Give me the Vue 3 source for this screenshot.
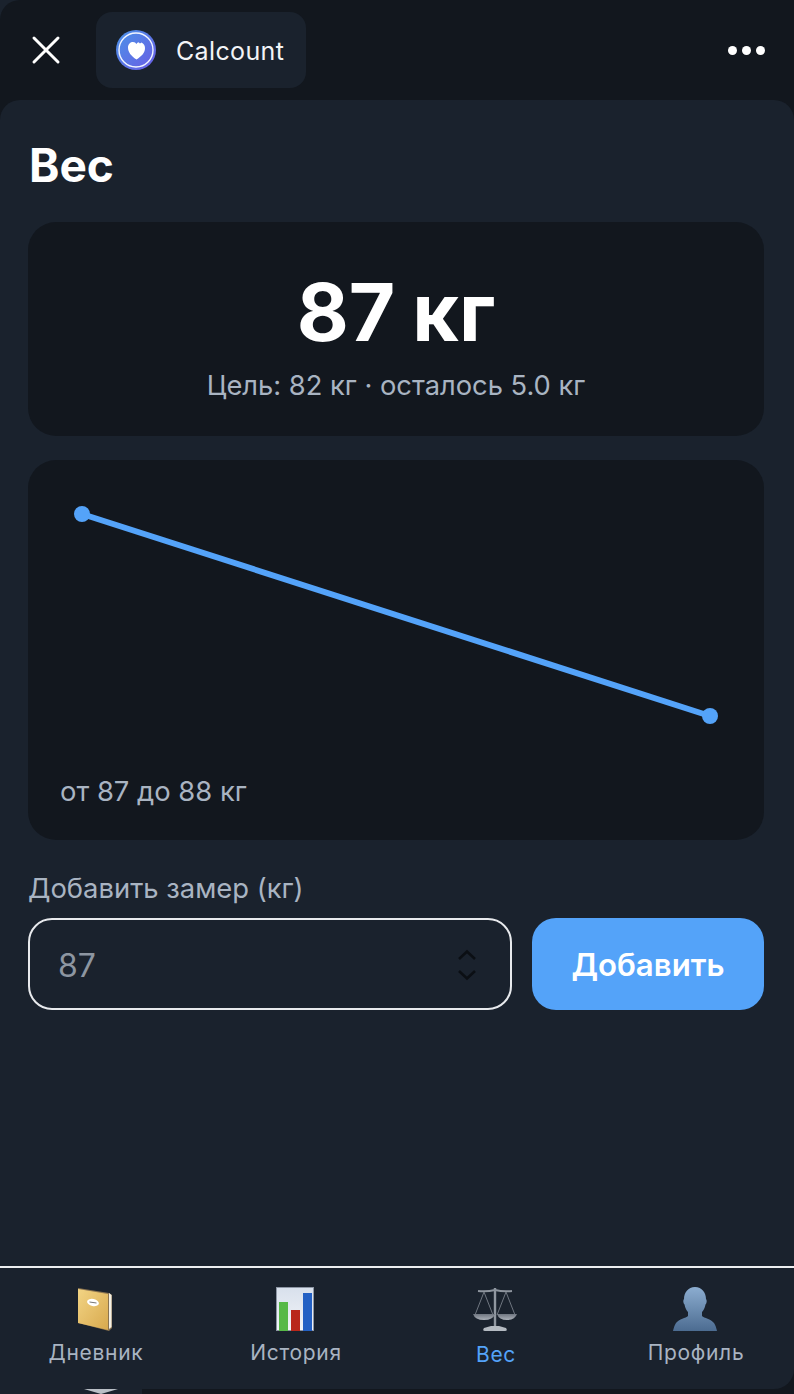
<template>
  <div class="screen">
    <!-- Top bar -->
    <header class="topbar">
      <button class="close-button" aria-label="Закрыть">
        <svg width="30" height="30" viewBox="0 0 30 30">
          <path d="M3 3 L27 27 M27 3 L3 27" stroke="#fff" stroke-width="3" stroke-linecap="round" />
        </svg>
      </button>
      <div class="app-pill">
        <svg class="app-logo" width="40" height="40" viewBox="0 0 40 40">
          <defs>
            <linearGradient id="logoFill" x1="0" y1="0" x2="1" y2="1">
              <stop offset="0" stop-color="#4a93e8" />
              <stop offset="1" stop-color="#6a5ce4" />
            </linearGradient>
          </defs>
          <circle cx="20" cy="20" r="20" fill="url(#logoFill)" />
          <circle cx="20" cy="20" r="17" fill="none" stroke="#f0f4ff" stroke-width="1.4" />
          <path d="M20.500 29.500 C15 26 12 22 12 17.500 C12 14 14.500 12 17 12 C18.600 12 19.700 12.800 20.400 14 C21 13 21.800 12.400 22.600 12.200 L24 13.400 L25.400 12.600 C27.800 13.600 29 15.600 29 18 C29 22.500 26 26 20.500 29.500 Z" fill="#fff" />
        </svg>
        <span class="app-name">Calcount</span>
      </div>
      <div class="more-dots">
        <span></span><span></span><span></span>
      </div>
    </header>

    <!-- Sheet -->
    <div class="sheet">
      <main class="content">
        <h1 class="page-title">Вес</h1>

        <section class="card current-card">
          <div class="current-value">87 кг</div>
          <div class="current-sub">Цель: 82 кг · осталось 5.0 кг</div>
        </section>

        <section class="card chart-card">
          <svg class="chart" width="672" height="283" viewBox="0 0 672 283">
            <line x1="22" y1="22" x2="650" y2="224" stroke="#54a3f9" stroke-width="6" />
            <circle cx="22" cy="22" r="8" fill="#54a3f9" />
            <circle cx="650" cy="224" r="8" fill="#54a3f9" />
          </svg>
          <div class="chart-caption">от 87 до 88 кг</div>
        </section>

        <label class="add-label">Добавить замер (кг)</label>
        <div class="add-row">
          <div class="weight-input">
            <span class="weight-value">87</span>
            <svg class="stepper" width="20" height="32" viewBox="0 0 20 32">
              <path d="M2 10 L10 2.500 L18 10 M2 22 L10 29.500 L18 22" fill="none" stroke="#0b0f14" stroke-width="2.600" />
            </svg>
          </div>
          <button class="add-button">Добавить</button>
        </div>
      </main>

      <!-- Tabs -->
      <nav class="tabs">
        <div v-for="tab in tabs" :key="tab.label" class="tab" :class="{ active: tab.active }">
          <svg v-if="tab.icon === 'book'" width="44" height="44" viewBox="0 0 44 44">
            <defs>
              <linearGradient id="bookFill" x1="0" y1="0" x2="1" y2="1">
                <stop offset="0" stop-color="#f2d484" />
                <stop offset="1" stop-color="#d8a94e" />
              </linearGradient>
            </defs>
            <path d="M5 1 L36 6 L39 8 L39 41 L36 44 L5 36 Z" fill="#8a7350" />
            <path d="M36 6 L38.500 8 L38.500 40 L36 42 Z" fill="#f4f0e4" />
            <path d="M5 2 L35 7 L35 43 L5 36 Z" fill="url(#bookFill)" />
            <ellipse cx="20" cy="15.500" rx="6" ry="3.600" fill="#fff" transform="rotate(12 20 15.500)" />
            <path d="M16.500 15 L23.500 16" stroke="#777" stroke-width="1" />
          </svg>
          <svg v-else-if="tab.icon === 'chart'" width="44" height="44" viewBox="0 0 44 44">
            <defs>
              <linearGradient id="chartFill" x1="0" y1="0" x2="0" y2="1">
                <stop offset="0" stop-color="#d8e0ec" />
                <stop offset="1" stop-color="#f2f4f8" />
              </linearGradient>
            </defs>
            <rect x="3.500" y="0.500" width="37" height="43" fill="url(#chartFill)" stroke="#8d96a4" />
            <rect x="6" y="15" width="9" height="29" fill="#57b947" />
            <rect x="18" y="23" width="9" height="21" fill="#b9271b" />
            <rect x="30" y="6" width="9" height="38" fill="#2360c4" />
          </svg>
          <svg v-else-if="tab.icon === 'scales'" width="44" height="44" viewBox="0 0 44 44">
            <defs>
              <linearGradient id="scaleFill" x1="0" y1="0" x2="0" y2="1">
                <stop offset="0" stop-color="#6f7680" />
                <stop offset="1" stop-color="#a9afb7" />
              </linearGradient>
            </defs>
            <rect x="20.800" y="1" width="2.400" height="38" fill="#9097a0" />
            <path d="M5 4 Q14 5 22 3 Q30 5 39 4" fill="none" stroke="#8d949d" stroke-width="2" />
            <path d="M11 5 L2 28 M11 5 L20 28 M33 5 L24 28 M33 5 L42 28" stroke="#6f7680" stroke-width="1" fill="none" />
            <path d="M0 27 H22 Q20 33 11 33 Q2 33 0 27 Z M24 27 H44 Q42 33 34 33 Q26 33 24 27 Z" fill="url(#scaleFill)" />
            <path d="M18 39 H26 L33 41 Q35 44 32 44 H12 Q9 44 11 41 Z" fill="#b4bac1" />
          </svg>
          <svg v-else width="44" height="44" viewBox="0 0 44 44">
            <defs>
              <linearGradient id="personFill" x1="0" y1="0" x2="0" y2="1">
                <stop offset="0" stop-color="#8cadd0" />
                <stop offset="1" stop-color="#4c6c91" />
              </linearGradient>
            </defs>
            <path d="M22 0 C29 0 33 6 33 12 C34 13 34 16 32.500 17.500 C32 21 30 24 29 25 L29 29 C31 31 38 32 41 36 C43 39 44 44 44 44 H0 C0 44 1 39 3 36 C6 32 13 31 15 29 L15 25 C14 24 12 21 11.500 17.500 C10 16 10 13 11 12 C11 6 15 0 22 0 Z" fill="url(#personFill)" />
          </svg>
          <span class="tab-label">{{ tab.label }}</span>
        </div>
      </nav>
    </div>
    <div class="bottom-strip">
      <span class="strip-notch"></span>
    </div>
  </div>
</template>

<script setup>
const tabs = [
  { label: 'Дневник', icon: 'book' },
  { label: 'История', icon: 'chart' },
  { label: 'Вес', icon: 'scales', active: true },
  { label: 'Профиль', icon: 'person' }
];
</script>

<style>
body {
  background: #1a222d;
}
</style>

<style scoped>
.screen {
  position: relative;
  width: 794px;
  height: 1394px;
  display: flex;
  flex-direction: column;
  overflow: hidden;
  border-top-left-radius: 20px;
  background: #12171e;
  color: #fff;
  font-family: Inter, "Noto Sans", sans-serif;
}

.topbar {
  height: 100px;
  flex-shrink: 0;
  display: flex;
  align-items: center;
  padding: 0 29px 0 31px;
}

.close-button {
  width: 30px;
  height: 30px;
  padding: 0;
  border: none;
  background: none;
  display: flex;
}

.app-pill {
  margin-left: 35px;
  width: 210px;
  height: 76px;
  box-sizing: border-box;
  padding-left: 20px;
  display: flex;
  align-items: center;
  gap: 20px;
  border-radius: 16px;
  background: #1a222d;
}

.app-name {
  margin-top: 2px;
  font-size: 25px;
  letter-spacing: 0.35px;
  color: #f2f4f7;
}

.more-dots {
  margin-left: auto;
  display: flex;
  gap: 5px;
}

.more-dots span {
  width: 9px;
  height: 9px;
  border-radius: 50%;
  background: #fff;
}

.sheet {
  flex: 1;
  min-height: 0;
  display: flex;
  flex-direction: column;
  border-radius: 20px 20px 20px 0;
  background: #1a222d;
  overflow: hidden;
}

.content {
  flex: 1;
  padding: 0 30px 0 28px;
}

.page-title {
  margin: 36px 0 0 1px;
  font-size: 46px;
  line-height: 58px;
  font-weight: 700;
}

.card {
  border-radius: 28px;
  background: #12171e;
}

.current-card {
  margin-top: 28px;
  height: 214px;
  box-sizing: border-box;
  padding-top: 50px;
  text-align: center;
}

.current-value {
  font-size: 80px;
  line-height: 80px;
  font-weight: 700;
  word-spacing: -2px;
}

.current-sub {
  margin-top: 18px;
  font-size: 27.3px;
  line-height: 32px;
  color: #a9b4c2;
}

.chart-card {
  margin-top: 24px;
  height: 380px;
  box-sizing: border-box;
  padding: 32px;
}

.chart {
  display: block;
}

.chart-caption {
  font-size: 27.4px;
  line-height: 32px;
  color: #a9b4c2;
}

.add-label {
  display: block;
  margin-top: 32px;
  font-size: 27.4px;
  line-height: 32px;
  color: #a9b4c2;
}

.add-row {
  margin-top: 14px;
  display: flex;
  gap: 20px;
}

.weight-input {
  width: 484px;
  height: 92px;
  box-sizing: border-box;
  padding: 0 33px 0 28px;
  display: flex;
  align-items: center;
  justify-content: space-between;
  border: 2px solid #e8eaed;
  border-radius: 24px;
}

.weight-value {
  margin-top: 2px;
  font-size: 32px;
  color: #8d96a1;
}

.stepper {
  margin-top: 2px;
}

.add-button {
  width: 232px;
  height: 92px;
  padding: 2px 0 0;
  border: none;
  border-radius: 24px;
  background: #54a3f9;
  color: #fff;
  font-family: inherit;
  font-size: 31.2px;
  font-weight: 600;
}

.tabs {
  height: 121px;
  flex-shrink: 0;
  margin-left: -5px;
  display: grid;
  grid-template-columns: repeat(4, 200px);
  border-top: 2px solid #eceef0;
}

.tab {
  padding-top: 19px;
  display: flex;
  flex-direction: column;
  align-items: center;
}

.tab-label {
  margin: 8px 0 0 2px;
  font-size: 21px;
  line-height: 28px;
  letter-spacing: 0.7px;
  color: #a9b4c2;
}

.tab.active .tab-label {
  margin-top: 10px;
  color: #54a3f9;
}

.bottom-strip {
  position: relative;
  flex-shrink: 0;
  width: 142px;
  height: 5px;
  background: #1a222d;
}

.strip-notch {
  position: absolute;
  left: 84px;
  top: 0;
  width: 0;
  height: 0;
  border-left: 17px solid transparent;
  border-right: 17px solid transparent;
  border-top: 5px solid #b9bfc6;
}
</style>
